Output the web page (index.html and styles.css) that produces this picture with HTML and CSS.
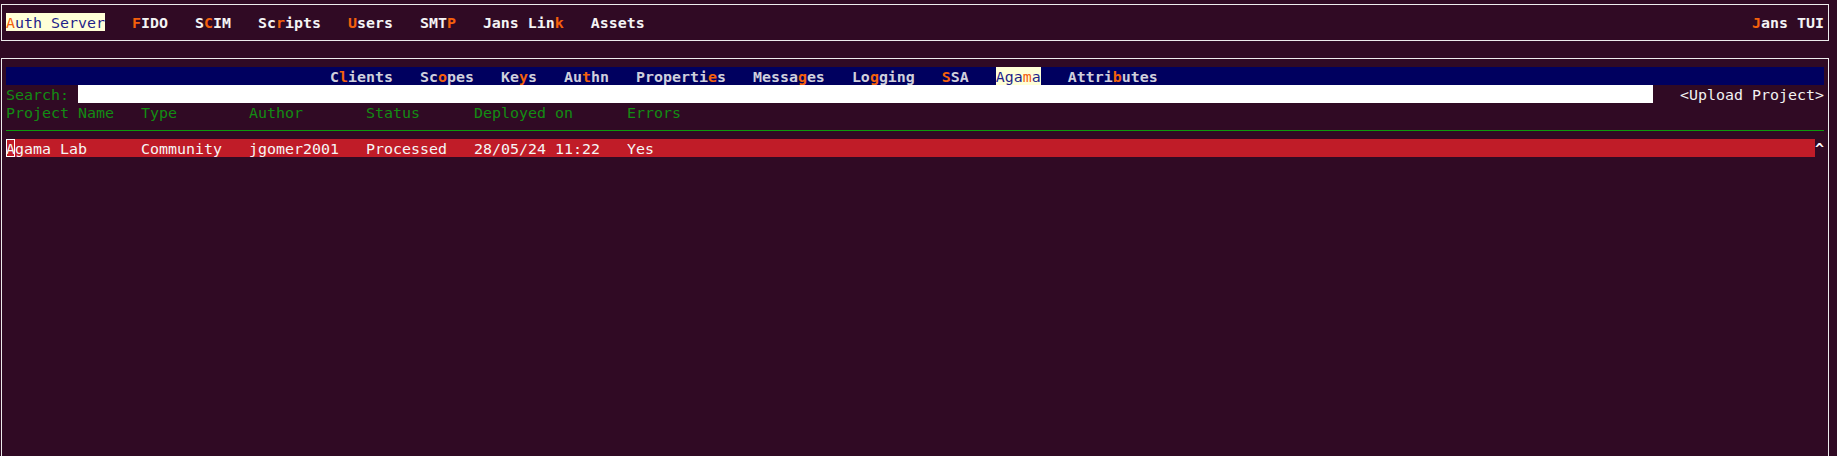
FILE: index.html
```html
<!DOCTYPE html>
<html lang="en">
<head>
<meta charset="utf-8">
<title>Jans TUI</title>
<link rel="stylesheet" href="styles.css">
</head>
<body>
<div class="term">
  <header class="topbox">
    <nav class="menu">
      <span class="item active"><span class="hk">A</span>uth Server</span>
      <span class="item"><span class="hk">F</span>IDO</span>
      <span class="item">S<span class="hk">C</span>IM</span>
      <span class="item">Sc<span class="hk">r</span>ipts</span>
      <span class="item"><span class="hk">U</span>sers</span>
      <span class="item">SMT<span class="hk">P</span></span>
      <span class="item">Jans Lin<span class="hk">k</span></span>
      <span class="item">Assets</span>
    </nav>
    <span class="brand"><span class="hk">J</span>ans TUI</span>
  </header>

  <section class="panel">
    <div class="tabs">
      <span class="tab">C<span class="hk">l</span>ients</span>
      <span class="tab">Sc<span class="hk">o</span>pes</span>
      <span class="tab">Ke<span class="hk">y</span>s</span>
      <span class="tab">Au<span class="hk">t</span>hn</span>
      <span class="tab">Properti<span class="hk">e</span>s</span>
      <span class="tab">Messa<span class="hk">g</span>es</span>
      <span class="tab">Lo<span class="hk">g</span>ging</span>
      <span class="tab"><span class="hk">S</span>SA</span>
      <span class="tab active">Aga<span class="hk">m</span>a</span>
      <span class="tab">Attri<span class="hk">b</span>utes</span>
    </div>

    <div class="search">
      <span class="label">Search: </span>
      <span class="field"></span>
      <span class="button">&lt;Upload Project&gt;</span>
    </div>

    <div class="row head">
      <span>Project Name</span>
      <span>Type</span>
      <span>Author</span>
      <span>Status</span>
      <span>Deployed on</span>
      <span>Errors</span>
    </div>
    <div class="sep"></div>
    <div class="datarow">
      <div class="row data">
        <span><span class="cursor">A</span>gama Lab</span>
        <span>Community</span>
        <span>jgomer2001</span>
        <span>Processed</span>
        <span>28/05/24 11:22</span>
        <span>Yes</span>
      </div>
      <span class="scroll">^</span>
    </div>
  </section>
</div>
</body>
</html>
```

FILE: styles.css
```css
html, body {
  margin: 0;
  height: 100%;
  overflow: hidden;
  background: #300a24;
}

body {
  font-family: "DejaVu Sans Mono", "Liberation Mono", monospace;
  font-size: 14.95px;
  line-height: 20px;
  color: #f2f2f2;
}

.term {
  padding: 4px 8px 0 1px;
}

.topbox {
  display: flex;
  justify-content: space-between;
  border: 1px solid #ececec;
  padding: 8px 4px 9px 4px;
  height: 18px;
  font-weight: bold;
  white-space: pre;
}

.menu {
  display: flex;
  gap: 27px;
  height: 18px;
}

.item, .brand {
  color: #f4f4f4;
  height: 18px;
}

.hk {
  color: #f4600c;
}

.item.active {
  background: #ffffd7;
  color: #1f1f8a;
  font-weight: normal;
}

.panel {
  margin-top: 17px;
  border: 1px solid #ececec;
  border-bottom: none;
  padding: 8px 4px 0 4px;
  height: 389px;
}

.tabs {
  display: flex;
  gap: 27px;
  height: 18px;
  background: #00005f;
  padding-left: 324px;
  font-weight: bold;
  white-space: pre;
}

.tab {
  color: #cfcfdc;
  height: 18px;
}

.tab.active {
  background: #ffffd7;
  color: #1f1f8a;
  font-weight: normal;
}

.search {
  display: flex;
  height: 18px;
  white-space: pre;
}

.label {
  color: #138c13;
  width: 72px;
}

.field {
  flex: 1;
  background: #ffffff;
}

.button {
  margin-left: 27px;
  color: #f2f2f2;
}

.row {
  display: grid;
  grid-template-columns: 135px 108px 117px 108px 153px 1fr;
  height: 18px;
  white-space: pre;
}

.head {
  color: #138c13;
}

.sep {
  height: 9px;
  border-bottom: 1px solid #0c9a0c;
  margin-bottom: 8px;
}

.datarow {
  display: flex;
  height: 18px;
}

.data {
  flex: 1;
  background: #c01c28;
  color: #f6f6f6;
}

.cursor {
  display: inline-block;
  width: 9px;
  height: 18px;
  box-shadow: inset 0 0 0 1px #ffffff;
}

.scroll {
  width: 9px;
  font-weight: bold;
  color: #ffffff;
}
```
